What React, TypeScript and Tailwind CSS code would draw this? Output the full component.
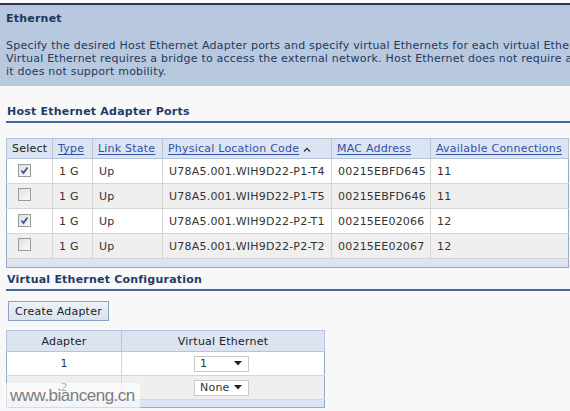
import { ReactNode } from 'react';

const ports = [
  { checked: true, type: '1 G', state: 'Up', loc: 'U78A5.001.WIH9D22-P1-T4', mac: '00215EBFD645', conn: '11' },
  { checked: false, type: '1 G', state: 'Up', loc: 'U78A5.001.WIH9D22-P1-T5', mac: '00215EBFD646', conn: '11' },
  { checked: true, type: '1 G', state: 'Up', loc: 'U78A5.001.WIH9D22-P2-T1', mac: '00215EE02066', conn: '12' },
  { checked: false, type: '1 G', state: 'Up', loc: 'U78A5.001.WIH9D22-P2-T2', mac: '00215EE02067', conn: '12' },
];

const adapters = [
  { id: '1', value: '1' },
  { id: '2', value: 'None' },
];

const Checkbox = ({ checked }: { checked: boolean }) => (
  <span className="inline-flex h-[13px] w-[13px] items-center justify-center border border-[#9a9a9a] bg-gradient-to-br from-[#e0e0e0] to-[#fafafa]">
    {checked && (
      <svg width="9" height="9" viewBox="0 0 9 9">
        <path d="M1.5 4.5 L3.5 7 L7.5 1.5" fill="none" stroke="#3b54a0" strokeWidth="1.8" />
      </svg>
    )}
  </span>
);

const SectionTitle = ({ children }: { children: ReactNode }) => (
  <div className="border-b-2 border-[#41699b] pb-[3px] pl-[1px] font-bold text-[#1f3c68]">{children}</div>
);

const HeadLink = ({ children }: { children: ReactNode }) => (
  <span className="text-[#3250a8] underline underline-offset-2">{children}</span>
);

const Dropdown = ({ value }: { value: string }) => (
  <div className="flex h-[16px] w-[55px] items-center justify-between border border-[#c9c9c9] bg-white pl-[5px] pr-[6px]">
    <span>{value}</span>
    <svg width="8" height="5" viewBox="0 0 8 5">
      <path d="M0 0 H8 L4 4.5 Z" fill="#222" />
    </svg>
  </div>
);

const App = () => {
  return (
    <div className="relative h-[411px] w-full overflow-hidden bg-[#f8f8f8] font-['DejaVu_Sans',sans-serif] text-[11px] leading-[13px] tracking-[0.22px] text-[#333]">
      <div className="h-[3px] bg-white" />
      <div className="h-[2px] bg-[#29344f]" />

      {/* page header */}
      <div className="h-[81px] bg-[#b8c8df] px-[6px] pt-[7px]">
        <div className="font-bold text-[#1d3660]">Ethernet</div>
        <div className="mt-[14px] whitespace-nowrap text-[#223a5e]">
          <div>Specify the desired Host Ethernet Adapter ports and specify virtual Ethernets for each virtual Ethernet adapter.</div>
          <div>Virtual Ethernet requires a bridge to access the external network. Host Ethernet does not require a bridge, but</div>
          <div>it does not support mobility.</div>
        </div>
      </div>

      <div className="pl-[6px] pt-[19px]">
        <SectionTitle>Host Ethernet Adapter Ports</SectionTitle>
      </div>

      {/* ports table */}
      <div className="pl-[6px] pt-[15px]">
        <table className="w-[562px] table-fixed border-collapse border border-[#97a9c8] whitespace-nowrap">
          <thead>
            <tr className="h-[20px] bg-[#dce4f1]">
              <th className="w-[46px] border border-[#b6c4da] px-[5px] text-left font-normal text-[#222]">Select</th>
              <th className="w-[40px] border border-[#b6c4da] px-[5px] text-left font-normal"><HeadLink>Type</HeadLink></th>
              <th className="w-[70px] border border-[#b6c4da] px-[5px] text-left font-normal"><HeadLink>Link State</HeadLink></th>
              <th className="w-[169px] border border-[#b6c4da] px-[5px] text-left font-normal">
                <HeadLink>Physical Location Code</HeadLink>
                <svg className="ml-[4px] inline-block align-middle" width="8" height="5" viewBox="0 0 8 5">
                  <path d="M1 4.5 L4 1.5 L7 4.5" fill="none" stroke="#333" strokeWidth="1.3" />
                </svg>
              </th>
              <th className="w-[99px] border border-[#b6c4da] px-[5px] text-left font-normal"><HeadLink>MAC Address</HeadLink></th>
              <th className="w-[138px] border border-[#b6c4da] pl-[5px] text-left font-normal"><HeadLink>Available Connections</HeadLink></th>
            </tr>
          </thead>
          <tbody>
            {ports.map((p, i) => (
              <tr key={p.loc} className={`h-[25px] border-b border-[#d6d6d6] ${i % 2 ? 'bg-[#efefef]' : 'bg-white'}`}>
                <td className="border-r border-[#d6d6d6] pl-[11px] align-middle"><Checkbox checked={p.checked} /></td>
                <td className="border-r border-[#d6d6d6] px-[6px]">{p.type}</td>
                <td className="border-r border-[#d6d6d6] px-[6px]">{p.state}</td>
                <td className="border-r border-[#d6d6d6] px-[6px]">{p.loc}</td>
                <td className="border-r border-[#d6d6d6] px-[6px]">{p.mac}</td>
                <td className="px-[6px]">{p.conn}</td>
              </tr>
            ))}
            <tr className="h-[9px] bg-[#dce4f1]">
              <td colSpan={6} />
            </tr>
          </tbody>
        </table>
      </div>

      <div className="pl-[6px] pt-[5px]">
        <SectionTitle>Virtual Ethernet Configuration</SectionTitle>
      </div>

      <div className="pl-[8px] pt-[10px]">
        <button className="h-[20px] w-[101px] border border-[#8ea2c0] bg-gradient-to-b from-[#eef2f8] to-[#d9e2ef] text-[11px] tracking-[0.22px] text-[#222]">
          Create Adapter
        </button>
      </div>

      {/* adapters table */}
      <div className="pl-[6px] pt-[9px]">
        <table className="w-[319px] border-collapse border border-[#97a9c8]">
          <thead>
            <tr className="h-[21px] bg-[#dce4f1]">
              <th className="w-[115px] border border-[#b6c4da] font-normal text-[#222]">Adapter</th>
              <th className="border border-[#b6c4da] font-normal text-[#222]">Virtual Ethernet</th>
            </tr>
          </thead>
          <tbody>
            {adapters.map((a, i) => (
              <tr key={a.id} className={`h-[24px] border-b border-[#d6d6d6] ${i % 2 ? 'bg-[#efefef]' : 'bg-white'}`}>
                <td className="border-r border-[#d6d6d6] text-center">{a.id}</td>
                <td className="pl-[72px]"><Dropdown value={a.value} /></td>
              </tr>
            ))}
            <tr className="h-[8px] bg-[#dce4f1]">
              <td colSpan={2} />
            </tr>
          </tbody>
        </table>
      </div>

      {/* watermark */}
      <div className="absolute left-[5px] top-[383px] bg-white/60 px-[5px] py-[2px] font-['Liberation_Sans',sans-serif] text-[17px] leading-[21px] tracking-[-0.5px] text-[#7d7d7d]">
        www.bianceng.cn
      </div>
    </div>
  );
};

export default App;
